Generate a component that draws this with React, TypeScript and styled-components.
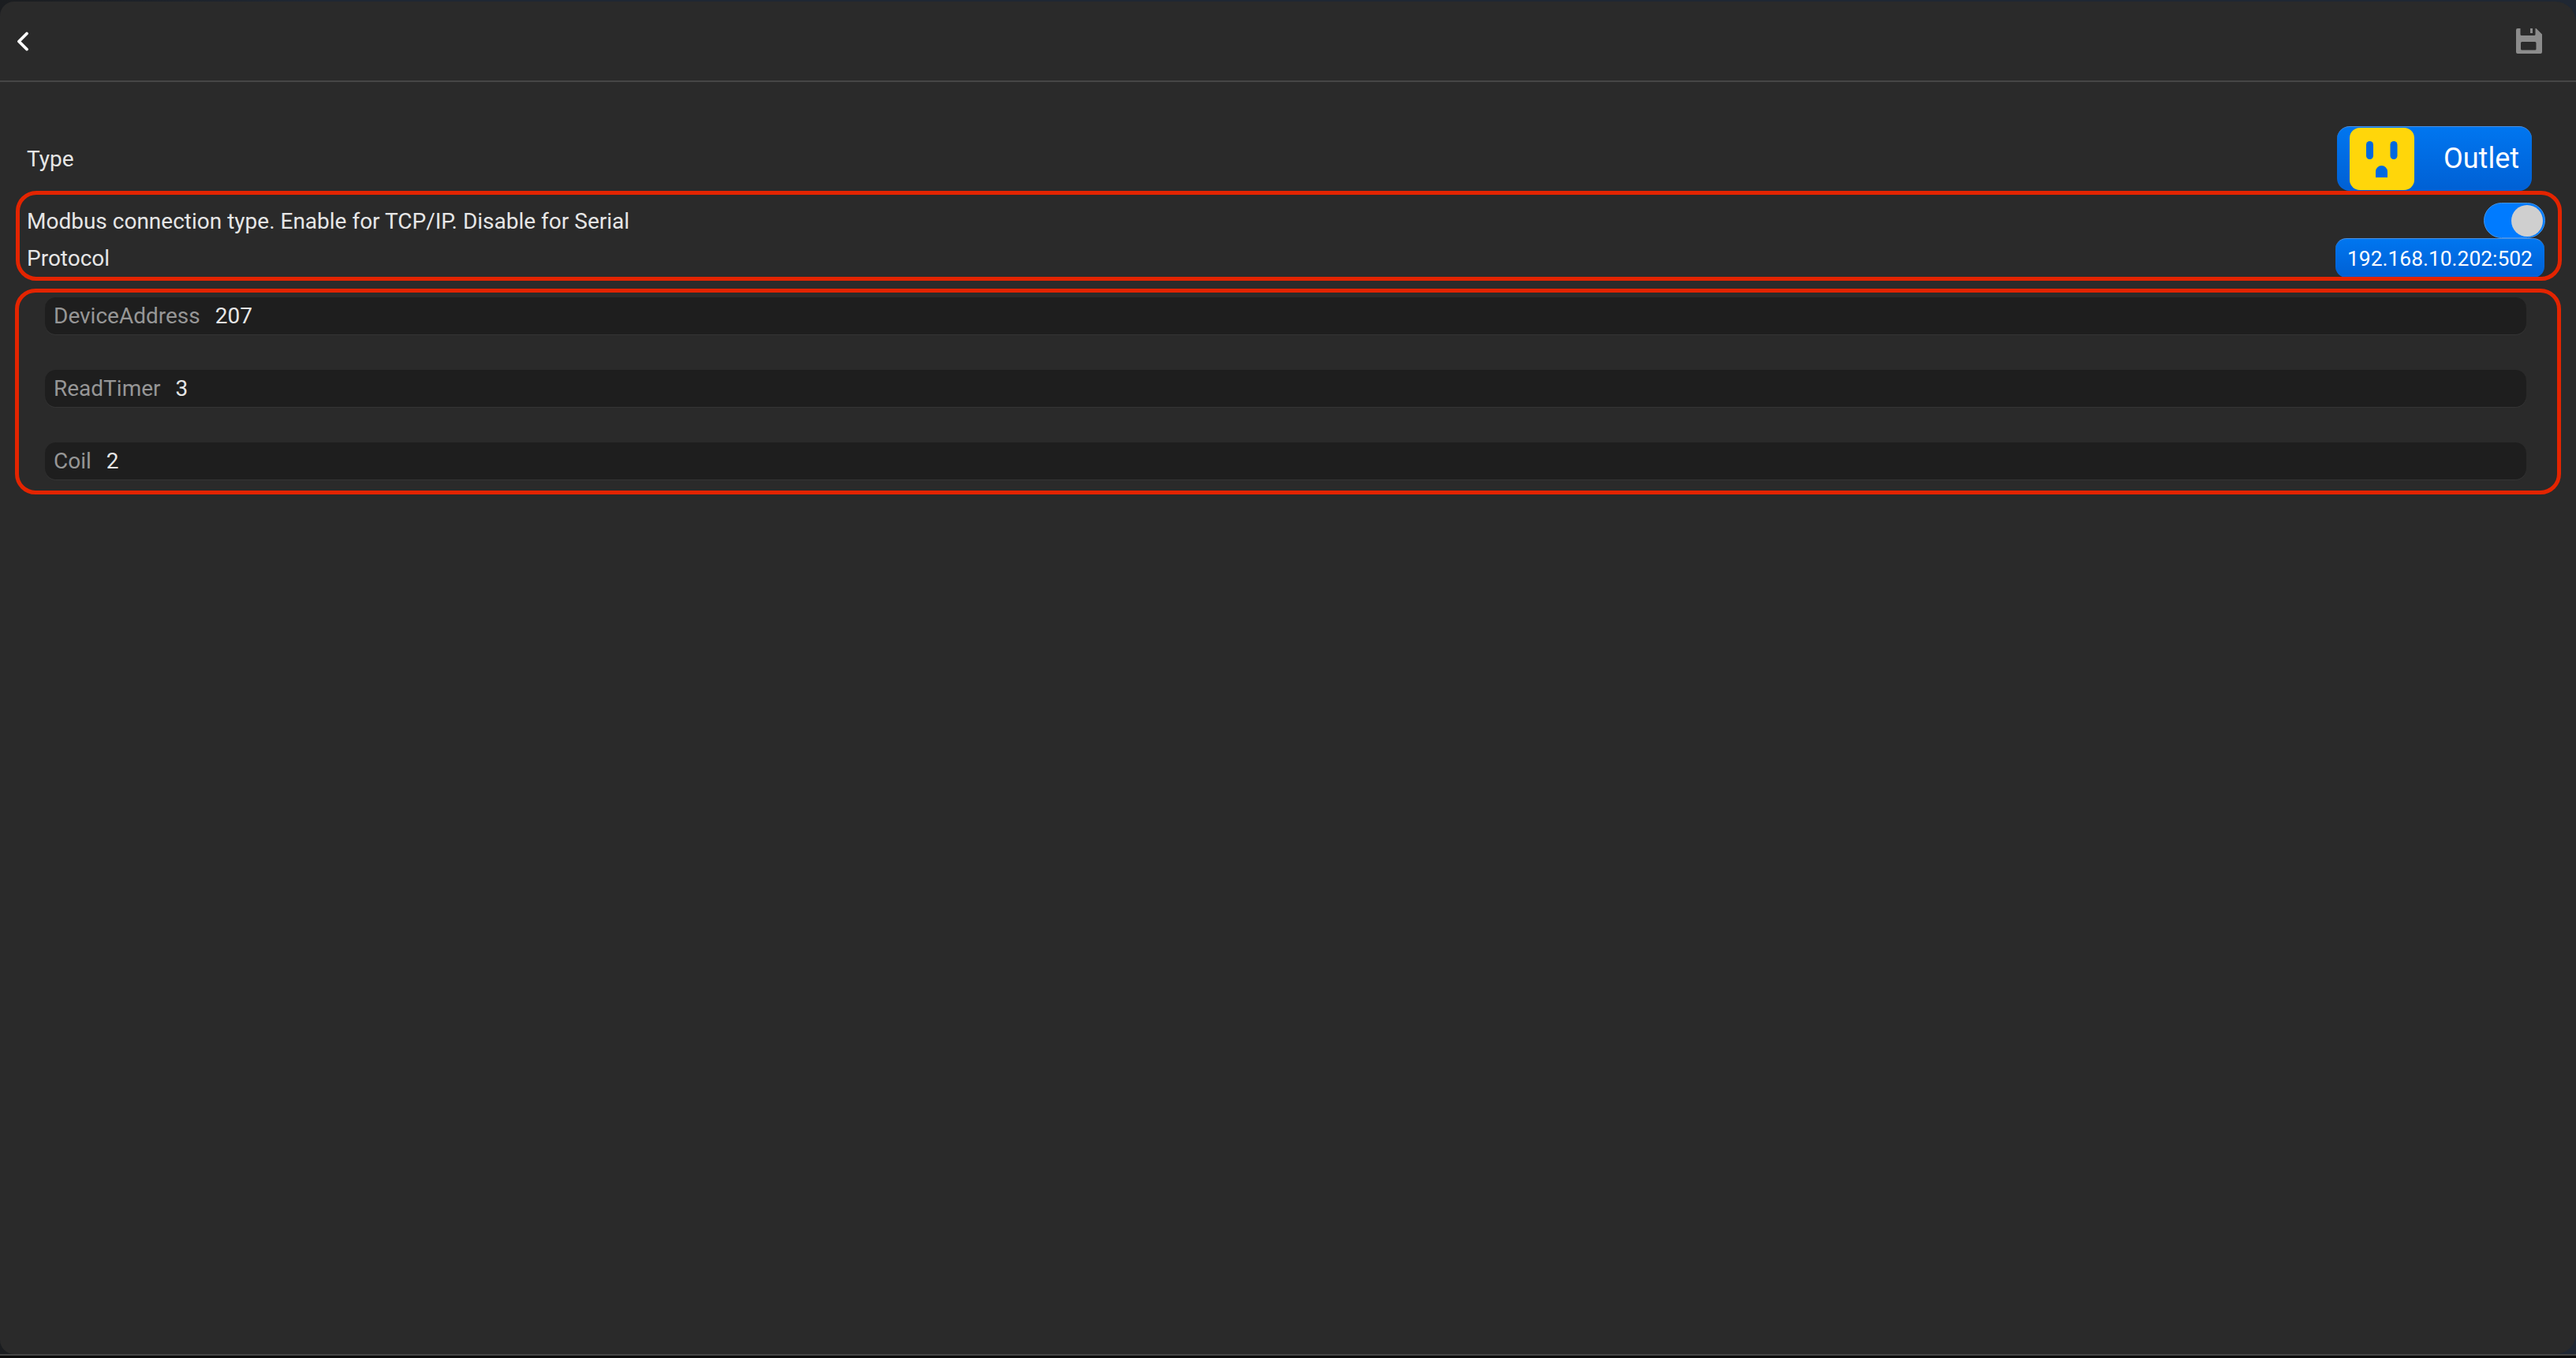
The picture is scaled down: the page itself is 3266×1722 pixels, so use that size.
import React from "react"
import styled, { createGlobalStyle } from "styled-components"

const GlobalStyle = createGlobalStyle`
  html, body {
    margin: 0;
    padding: 0;
    background: #0b1420;
  }

  body {
    font-family: Roboto, "Liberation Sans", sans-serif;
  }
`

interface FieldData {
  label: string
  value: string
}

const FIELDS: FieldData[] = [
  { label: "DeviceAddress", value: "207" },
  { label: "ReadTimer", value: "3" },
  { label: "Coil", value: "2" },
]

const BackIcon = () => (
  <svg width="17" height="25" viewBox="0 0 17 25" fill="none">
    <path d="M14 2.500 L4 12.500 L14 22.500" stroke="#fff" strokeWidth="3.800" strokeLinecap="round" strokeLinejoin="round" />
  </svg>
)

const SaveIcon = () => (
  <svg width="33" height="32" viewBox="0 0 33 32">
    <path
      fillRule="evenodd"
      fill="#8c8c8c"
      d="M2 0H5.500V7.500A1.500 1.500 0 0 0 7 9H23A1.500 1.500 0 0 0 24.500 7.500V0H25.500L33 7.500V30A2 2 0 0 1 31 32H2A2 2 0 0 1 0 30V2A2 2 0 0 1 2 0ZM18 0H21V6H18ZM7.500 17A1.500 1.500 0 0 0 6 18.500V26A1.500 1.500 0 0 0 7.500 27.500H24A1.500 1.500 0 0 0 25.500 26V18.500A1.500 1.500 0 0 0 24 17Z"
    />
  </svg>
)

const OutletIcon = () => (
  <svg width="82" height="79" viewBox="0 0 82 79">
    <rect width="82" height="79" rx="13" fill="#ffd60a" />
    <rect x="21" y="17" width="9" height="23" rx="4.500" fill="#0069e0" />
    <rect x="51.500" y="17" width="9" height="23" rx="4.500" fill="#0069e0" />
    <path d="M33 63V55.500A7.500 7.500 0 0 1 48 55.500V63Z" fill="#0069e0" />
  </svg>
)

const App: React.FC = () => {
  return (
    <Page>
      <GlobalStyle />
      <Panel>
        <Header>
          <BackIcon />
          <SaveIcon />
        </Header>

        <TypeRow>
          <RowLabel>Type</RowLabel>
          <TypeButton>
            <OutletIcon />
            <TypeName>Outlet</TypeName>
          </TypeButton>
        </TypeRow>

        <ConnectionGroup>
          <ConnectionRow>
            <RowLabel>Modbus connection type. Enable for TCP/IP. Disable for Serial</RowLabel>
            <Toggle>
              <Knob />
            </Toggle>
          </ConnectionRow>
          <ConnectionRow>
            <RowLabel>Protocol</RowLabel>
            <AddressButton>192.168.10.202:502</AddressButton>
          </ConnectionRow>
        </ConnectionGroup>

        <FieldGroup>
          {FIELDS.map((field) => (
            <Field key={field.label}>
              <FieldLabel>{field.label}</FieldLabel>
              <FieldValue>{field.value}</FieldValue>
            </Field>
          ))}
        </FieldGroup>
      </Panel>
      <BottomLine />
    </Page>
  )
}

export default App

const Page = styled.div`
  width: 3266px;
  height: 1722px;
  display: flex;
  flex-direction: column;
  overflow: hidden;
  padding-top: 2px;
  box-sizing: border-box;
  background: linear-gradient(90deg, #1b1d20 0%, #1f2733 12%, #1f2733 100%);
`

const Panel = styled.main`
  flex: 1;
  min-height: 0;
  background: #2a2a2a;
  border-radius: 18px 26px 26px 18px;
  display: flex;
  flex-direction: column;
`

const BottomLine = styled.div`
  height: 5px;
  flex: none;
  border-top: 2px solid #454545;
  background: #0c0c0c;
  box-sizing: border-box;
`

const Header = styled.header`
  height: 102px;
  flex: none;
  box-sizing: border-box;
  border-bottom: 2px solid #464646;
  padding: 0 43px 0 20px;
  display: flex;
  align-items: center;
  justify-content: space-between;
  margin-bottom: 56px;
`

const TypeRow = styled.section`
  height: 82px;
  padding: 0 56px 0 34px;
  display: flex;
  align-items: center;
  justify-content: space-between;
`

const RowLabel = styled.span`
  font-size: 28px;
  line-height: 32px;
  padding-top: 2px;
  color: #e6e6e6;
`

const TypeButton = styled.div`
  width: 247px;
  height: 82px;
  box-sizing: border-box;
  border-radius: 16px;
  padding: 1px 16px;
  border-top: 1px solid #4a90e2;
  background: linear-gradient(180deg, #0076f0 0%, #0060d4 100%);
  display: flex;
  align-items: flex-start;
  justify-content: space-between;
`

const TypeName = styled.span`
  font-size: 36px;
  line-height: 79px;
  color: #fff;
`

const ConnectionGroup = styled.section`
  position: relative;
  height: 114px;
  padding: 14px 40px 0 34px;
  box-sizing: border-box;

  &::after {
    content: "";
    position: absolute;
    inset: 0 18px 0 20px;
    border: 5px solid #e32400;
    border-radius: 26px;
    pointer-events: none;
  }
`

const ConnectionRow = styled.div`
  display: flex;
  align-items: center;
  justify-content: space-between;
  height: 47px;
`

const Toggle = styled.div`
  width: 78px;
  height: 45px;
  margin-right: -1px;
  box-sizing: border-box;
  border-radius: 23px;
  border: 1px solid #3f95f0;
  background: #007bff;
  display: flex;
  align-items: center;
  justify-content: flex-end;
  padding-right: 2px;
`

const Knob = styled.div`
  width: 40px;
  height: 40px;
  border-radius: 50%;
  background: #cfcfcf;
`

const AddressButton = styled.div`
  width: 265px;
  height: 50px;
  margin-top: 1px;
  box-sizing: border-box;
  border-top: 1px solid #4a90e2;
  border-radius: 14px;
  background: linear-gradient(180deg, #0076f0 0%, #0060d4 100%);
  color: #fff;
  font-size: 26.400px;
  display: flex;
  align-items: center;
  justify-content: center;
`

const FieldGroup = styled.section`
  position: relative;
  margin-top: 10px;
  height: 261px;
  box-sizing: border-box;
  padding: 11px 63px 0 57px;
  display: flex;
  flex-direction: column;
  gap: 45px;

  &::after {
    content: "";
    position: absolute;
    inset: 0 19px 0 19px;
    border: 5px solid #e32400;
    border-radius: 26px;
    pointer-events: none;
  }
`

const Field = styled.div`
  height: 47px;
  box-sizing: border-box;
  padding: 0 11px;
  border-radius: 14px;
  background: #1e1e1e;
  box-shadow: 0 1px 0 #353535;
  display: flex;
  align-items: center;
  gap: 19px;
  font-size: 28px;
`

const FieldLabel = styled.span`
  color: #969696;
`

const FieldValue = styled.span`
  color: #e6e6e6;
`
